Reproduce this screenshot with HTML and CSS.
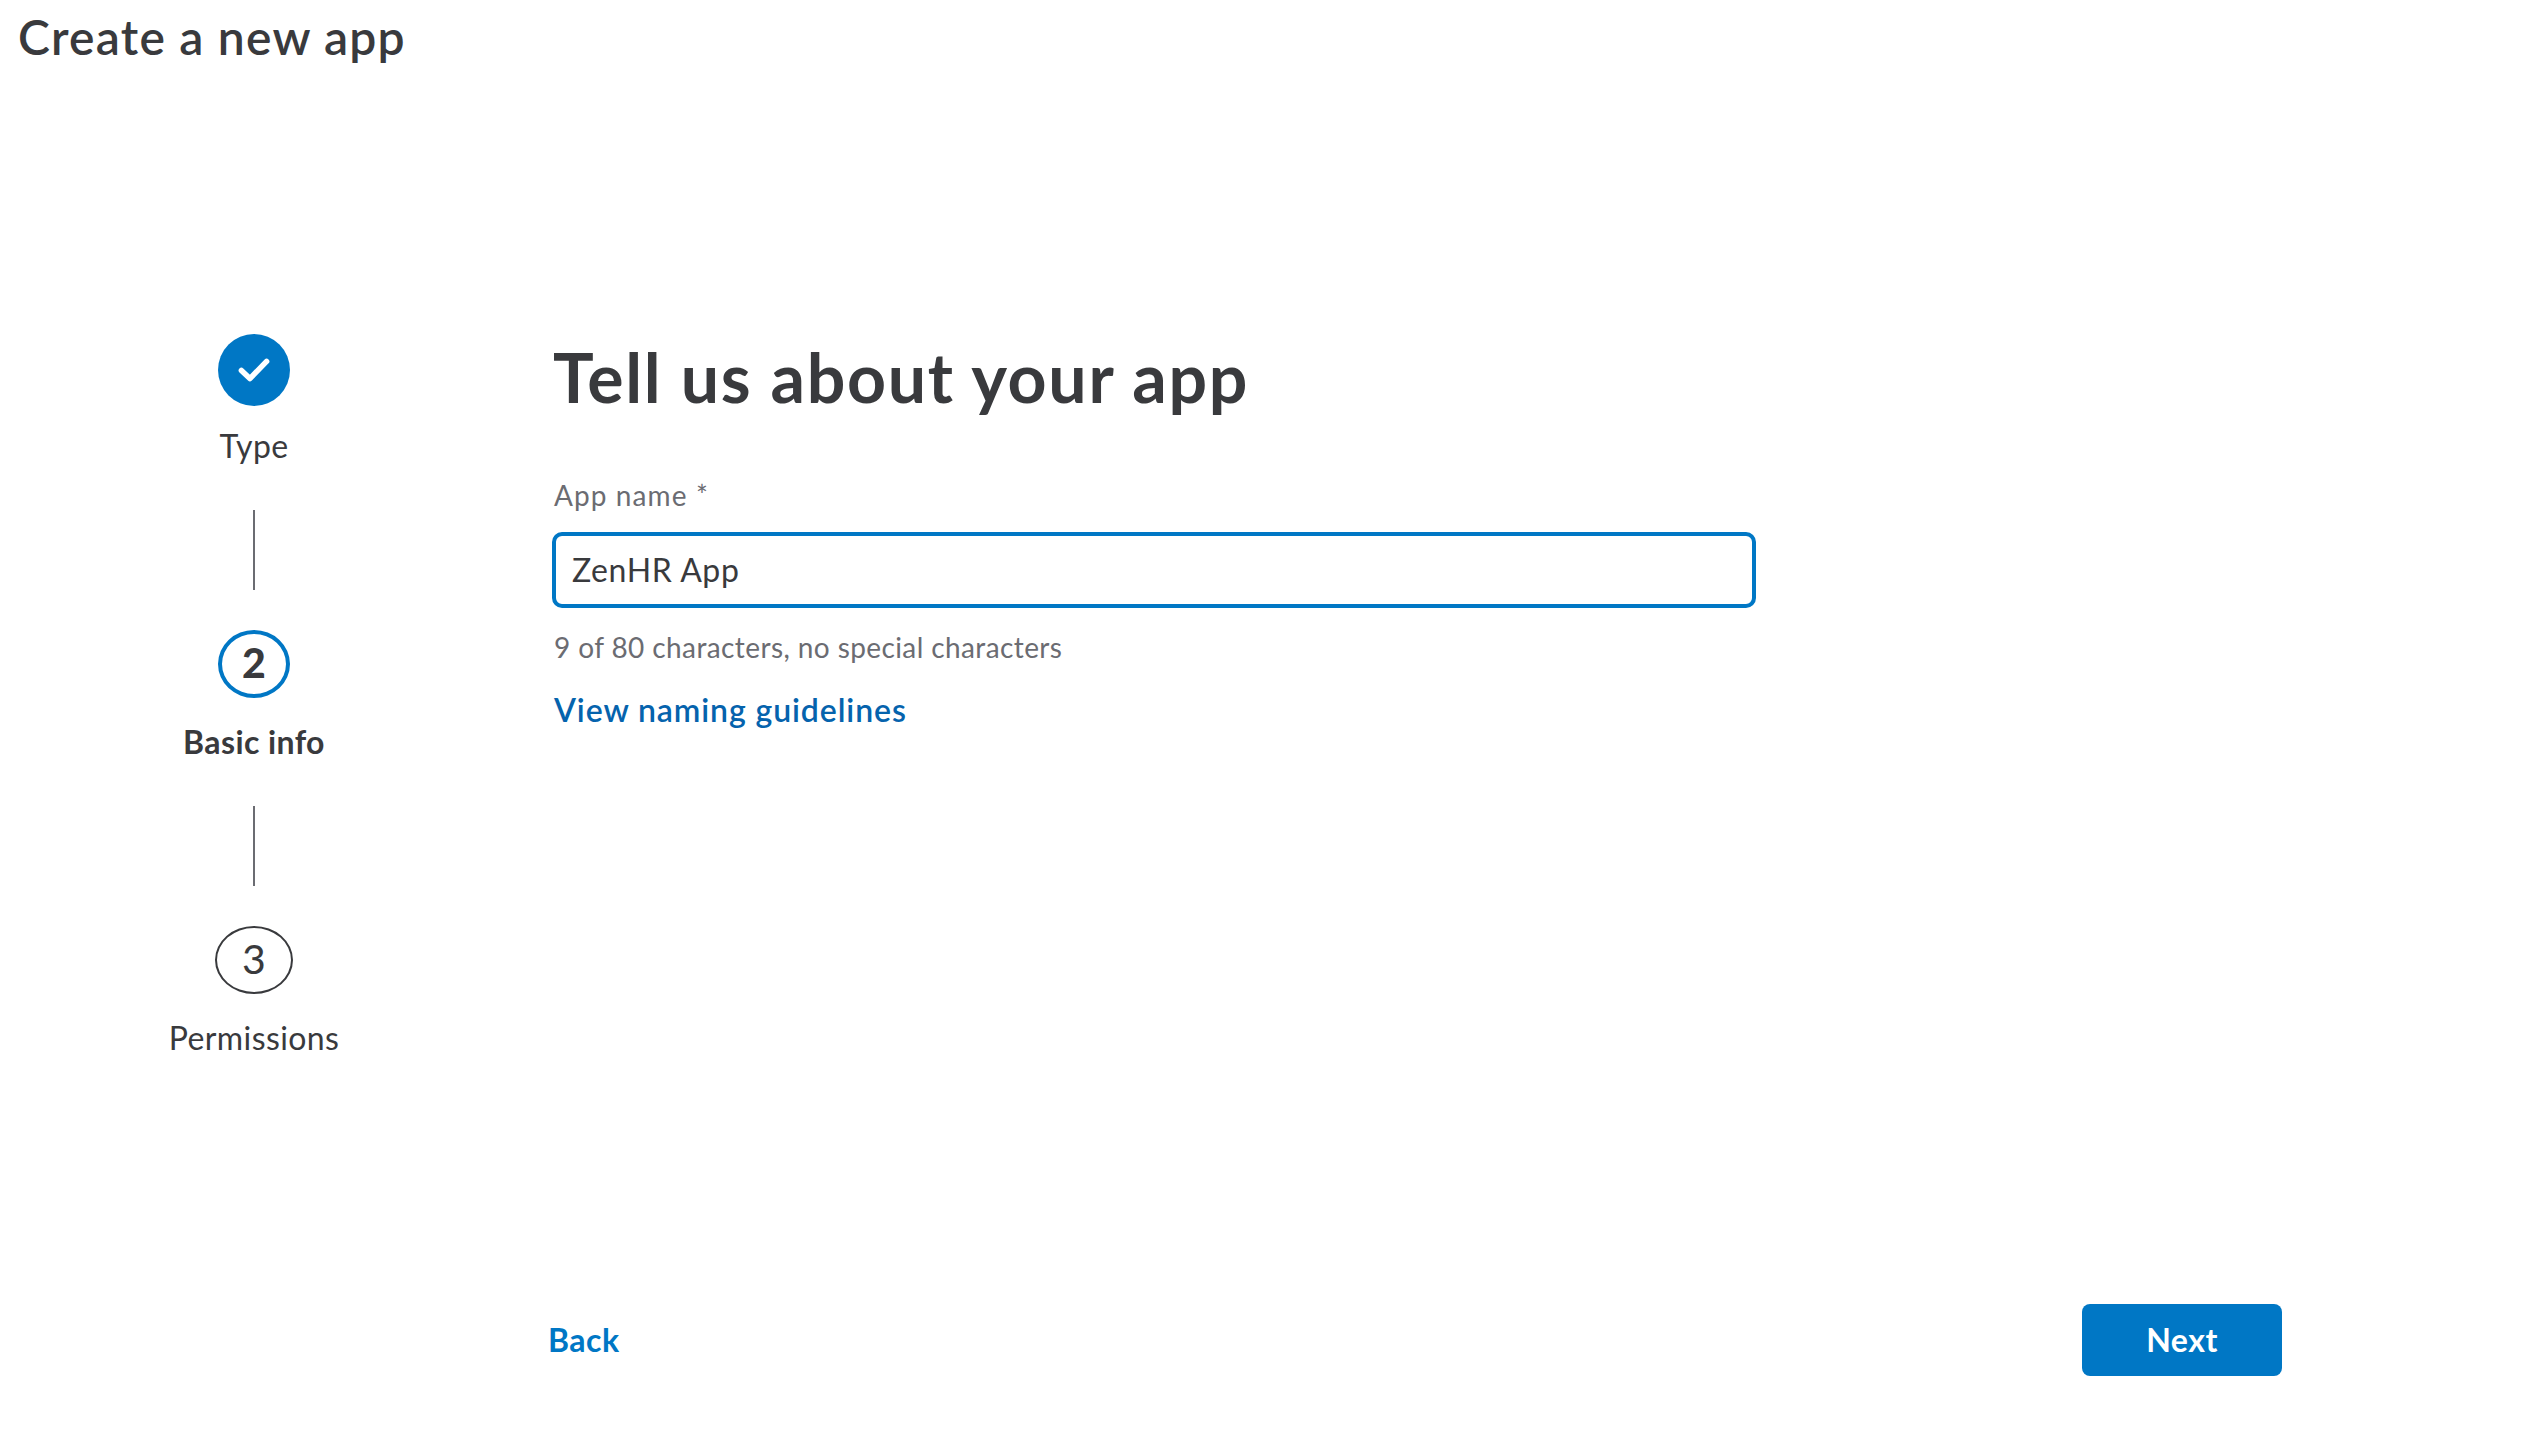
FILE: index.html
```html
<!DOCTYPE html>
<html lang="en">
<head>
    <meta charset="UTF-8">
    <meta name="viewport" content="width=device-width, initial-scale=1.0">
    <title>Create a new app</title>
    <link rel="stylesheet" href="styles.css">
</head>
<body>
    <header class="page-header">
        <h1 class="page-title">Create a new app</h1>
    </header>

    <main class="wizard">
        <ol class="steps">
            <li class="step">
                <div class="badge-row">
                    <span class="badge badge-done">
                        <svg class="check" viewBox="0 0 72 72" aria-hidden="true">
                            <path d="M23.4 36.4 L31.9 44.6 L48.6 27.4" />
                        </svg>
                    </span>
                </div>
                <span class="step-label">Type</span>
            </li>
            <li class="connector"></li>
            <li class="step">
                <div class="badge-row">
                    <span class="badge badge-current">2</span>
                </div>
                <span class="step-label step-label-current">Basic info</span>
            </li>
            <li class="connector"></li>
            <li class="step">
                <div class="badge-row">
                    <span class="badge badge-next">3</span>
                </div>
                <span class="step-label">Permissions</span>
            </li>
        </ol>

        <form class="app-form" id="appForm">
            <h2 class="form-title">Tell us about your app</h2>
            <label class="field-label" for="appName">App name *</label>
            <input class="field-input" type="text" id="appName" name="appName" value="ZenHR App" maxlength="80" autocomplete="off" spellcheck="false">
            <p class="field-help">9 of 80 characters, no special characters</p>
            <a class="field-link" href="#">View naming guidelines</a>
        </form>
    </main>

    <footer class="actions">
        <button class="btn btn-back" type="button">Back</button>
        <button class="btn btn-next" type="submit" form="appForm">Next</button>
    </footer>
</body>
</html>
```
FILE: styles.css
```css
* {
    box-sizing: border-box;
}

body {
    margin: 0;
    min-height: 100vh;
    display: flex;
    flex-direction: column;
    background: #fff;
    color: #393a3d;
    font-family: Lato, "Open Sans", sans-serif;
    font-size: 32px;
    letter-spacing: 0.4px;
}

.page-header {
    padding: 8px 18px 0;
}

.page-title {
    margin: 0;
    font-size: 48px;
    font-weight: 600;
    line-height: 57px;
    letter-spacing: 1.22px;
}

.wizard {
    flex: 1;
    display: flex;
    padding-top: 269px;
}

/* steps */
.steps {
    width: 508px;
    margin: 0;
    padding: 0;
    list-style: none;
    display: flex;
    flex-direction: column;
    align-items: center;
}

.step {
    display: flex;
    flex-direction: column;
    align-items: center;
}

.badge-row {
    height: 92px;
}

.badge {
    display: flex;
    align-items: center;
    justify-content: center;
    width: 72px;
    height: 68px;
    padding-bottom: 3px;
    border-radius: 50%;
    font-size: 41px;
    letter-spacing: 0;
}

.badge-done {
    height: 72px;
    padding: 0;
    background: #0077c5;
}

.badge-current {
    border: 4px solid #0077c5;
    font-weight: 900;
}

.badge-next {
    width: 78px;
    border: 2px solid #393a3d;
}

.check {
    width: 72px;
    height: 72px;
    fill: none;
    stroke: #fff;
    stroke-width: 5.5;
    stroke-linecap: round;
    stroke-linejoin: round;
}

.step-label {
    line-height: 40px;
}

.step-label-current {
    font-weight: 700;
}

.connector {
    width: 2px;
    height: 80px;
    margin: 44px 0 40px;
    background: #6b6c72;
}

/* form */
.app-form {
    width: 1204px;
    margin-left: 44px;
    display: flex;
    flex-direction: column;
    align-items: flex-start;
}

.form-title {
    margin: 2px 0 61px 1px;
    font-size: 68px;
    font-weight: 700;
    line-height: 81px;
    letter-spacing: 1.68px;
}

.field-label {
    margin: 0 0 20px 2px;
    color: #6b6c72;
    font-size: 28px;
    line-height: 34px;
    letter-spacing: 1.1px;
}

.field-input {
    width: 100%;
    height: 76px;
    padding: 0 16px 2px;
    border: 4px solid #0077c5;
    border-radius: 10px;
    outline: none;
    background: #fff;
    color: #393a3d;
    font-family: inherit;
    font-size: 32px;
    letter-spacing: 0.6px;
}

.field-help {
    margin: 22px 0 26px 2px;
    color: #6b6c72;
    font-size: 28px;
    line-height: 34px;
}

.field-link {
    margin-left: 2px;
    color: #0563ad;
    font-weight: 600;
    line-height: 40px;
    letter-spacing: 0.9px;
    text-decoration: none;
}

/* bottom buttons */
.actions {
    display: flex;
    justify-content: space-between;
    padding: 0 240px 58px 548px;
}

.btn {
    height: 72px;
    padding: 0 0 2px;
    border: none;
    background: none;
    font-family: inherit;
    font-size: 32px;
    font-weight: 700;
    letter-spacing: 0.5px;
    cursor: pointer;
}

.btn-back {
    color: #0077c5;
}

.btn-next {
    width: 200px;
    border-radius: 8px;
    background: #0077c5;
    color: #fff;
}
```
